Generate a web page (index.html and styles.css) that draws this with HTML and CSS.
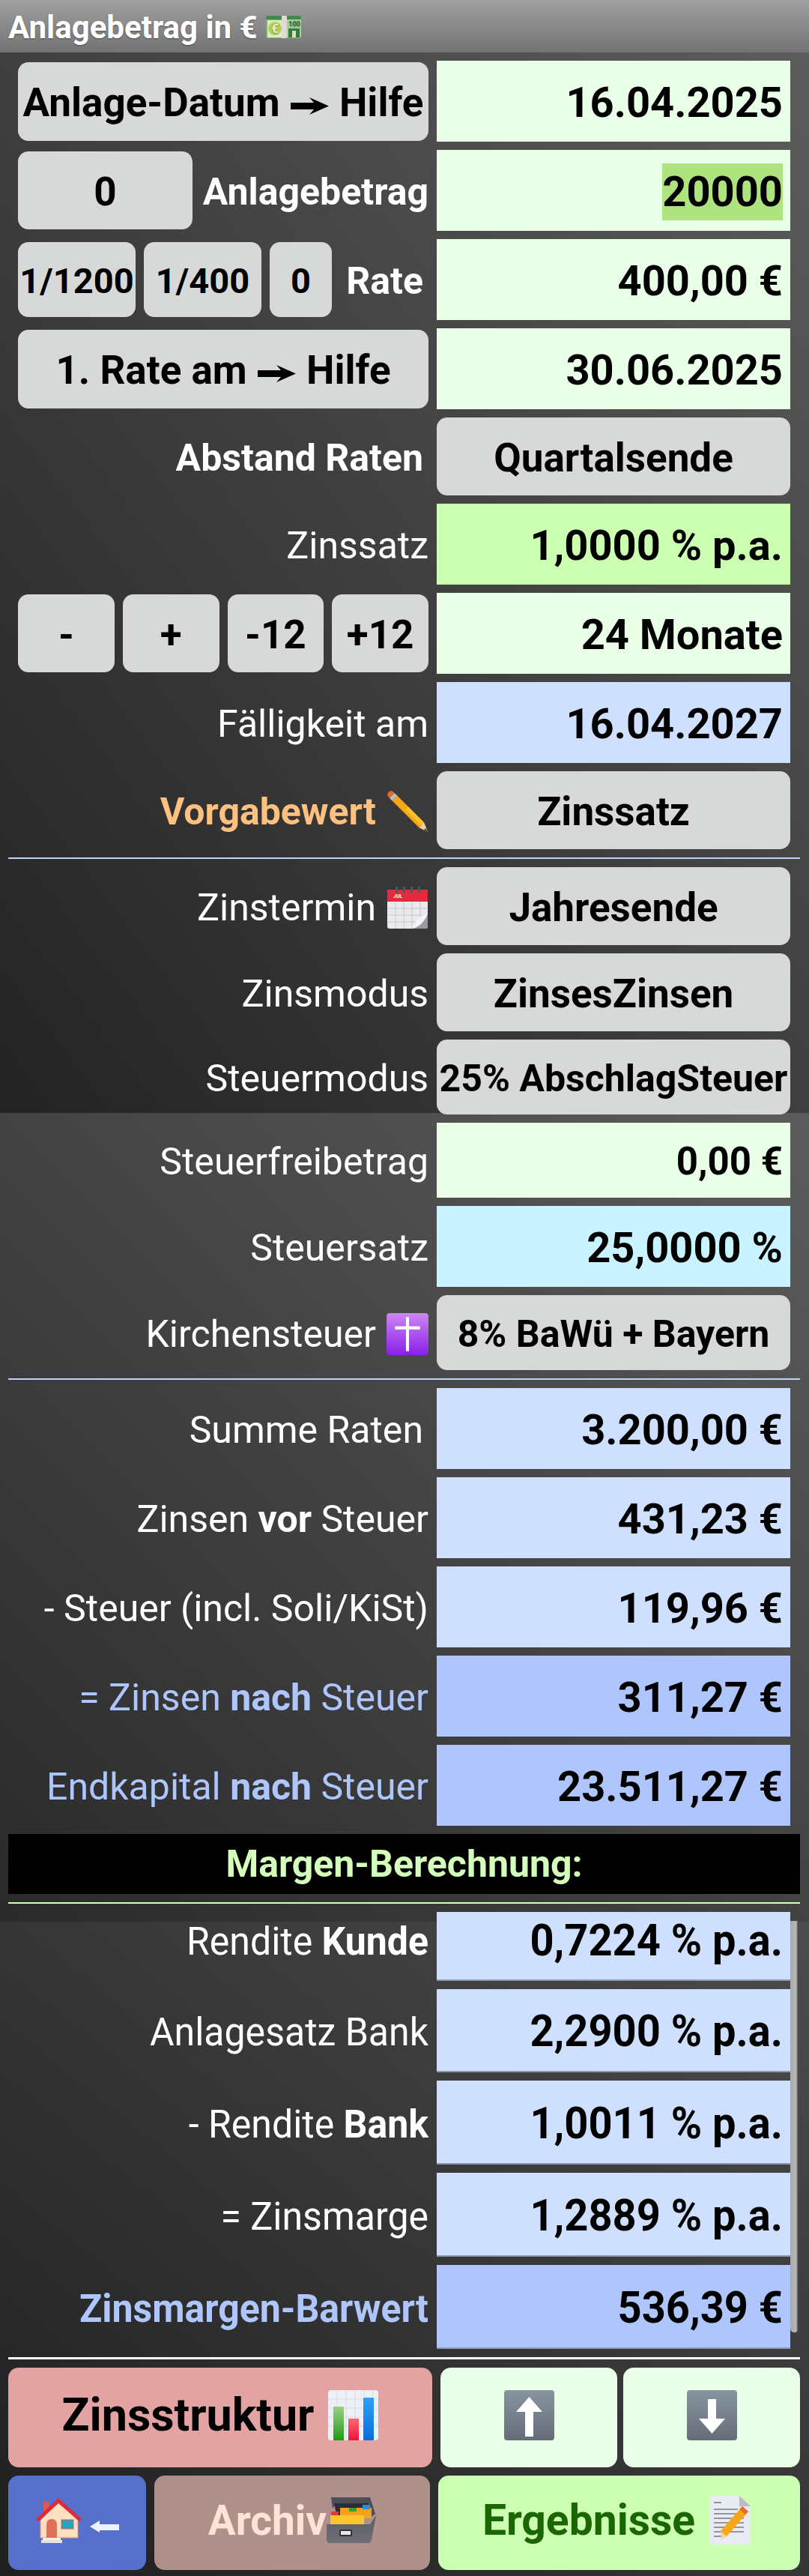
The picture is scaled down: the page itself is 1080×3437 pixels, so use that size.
FILE: index.html
```html
<!DOCTYPE html>
<html lang="de">
<head>
    <meta charset="UTF-8">
    <meta name="viewport" content="width=device-width, initial-scale=1.0">
    <title>Anlagebetrag in €</title>
    <link rel="stylesheet" href="styles.css">
</head>
<body>
    <header class="title-bar">
        <span>Anlagebetrag in €</span>
        <svg class="ico-note" viewBox="0 0 47 30">
            <rect x="0" y="0" width="47" height="30" rx="3" fill="#7fb56f"/>
            <rect x="0" y="0" width="47" height="5" rx="2" fill="#3f8a4a"/>
            <rect x="2" y="6" width="20" height="23" fill="#dbeacb"/>
            <circle cx="12" cy="17" r="9" fill="#b5cf55"/>
            <text x="12" y="23" text-anchor="middle" class="ico-text" font-size="16" fill="#eef5c0">€</text>
            <rect x="21" y="0" width="7" height="30" fill="#dcdcd4"/>
            <rect x="28" y="5" width="19" height="24" fill="#a8cf9a"/>
            <text x="38" y="14" text-anchor="middle" class="ico-text" font-size="9" fill="#2e6b36">100</text>
            <rect x="30" y="17" width="15" height="12" fill="#2f7d3c"/>
            <rect x="35" y="20" width="5" height="9" fill="#cfe4c0"/>
        </svg>
    </header>

    <main class="screen">
        <div class="row">
            <button class="btn btn-wide">Anlage-Datum <svg class="arrow" viewBox="0 0 51 23"><polygon points="0,7 31,7 25,0 51,11.500 25,23 31,16 0,16"/></svg> Hilfe</button>
            <div class="val val-green">16.04.2025</div>
        </div>
        <div class="row">
            <div class="left-split">
                <button class="btn btn-zero">0</button>
                <span class="lab lab-bold">Anlagebetrag</span>
            </div>
            <div class="val val-green"><span class="selected">20000</span></div>
        </div>
        <div class="row">
            <div class="left-split left-split-tight">
                <button class="btn btn-frac btn-small">1/1200</button>
                <button class="btn btn-frac btn-small">1/400</button>
                <button class="btn btn-nil btn-small">0</button>
                <span class="lab lab-bold lab-inset">Rate</span>
            </div>
            <div class="val val-green">400,00 €</div>
        </div>
        <div class="row">
            <button class="btn btn-wide">1. Rate am <svg class="arrow" viewBox="0 0 51 23"><polygon points="0,7 31,7 25,0 51,11.500 25,23 31,16 0,16"/></svg> Hilfe</button>
            <div class="val val-green">30.06.2025</div>
        </div>
        <div class="row row-104">
            <span class="lab lab-bold lab-inset">Abstand Raten</span>
            <button class="btn btn-full">Quartalsende</button>
        </div>
        <div class="row">
            <span class="lab">Zinssatz</span>
            <div class="val val-lime">1,0000 % p.a.</div>
        </div>
        <div class="row">
            <div class="step-grid">
                <button class="btn btn-step">-</button>
                <button class="btn btn-step">+</button>
                <button class="btn btn-step">-12</button>
                <button class="btn btn-step">+12</button>
            </div>
            <div class="val val-green">24 Monate</div>
        </div>
        <div class="row">
            <span class="lab">Fälligkeit am</span>
            <div class="val val-blue">16.04.2027</div>
        </div>
        <div class="row row-104">
            <span class="lab lab-bold lab-orange lab-icon">Vorgabewert
                <svg class="ico-emoji" viewBox="0 0 58 58">
                    <polygon points="52,44 15,7 8,14 45,51" fill="#f7a713"/>
                    <polygon points="52,44 30,22 26,26 48,48" fill="#fbc02d"/>
                    <polygon points="15,7 8,14 4,10 11,3" fill="#bdbdbd"/>
                    <path d="M11 3 L4 10 Q-1 5 3 2 Q7 -2 11 3Z" fill="#ea6a2a"/>
                    <polygon points="52,44 45,51 57,57" fill="#f3cfa2"/>
                    <polygon points="54,52 52,54 57,57" fill="#333"/>
                </svg>
            </span>
            <button class="btn btn-full">Zinssatz</button>
        </div>

        <hr class="rule rule-blue">

        <div class="row row-104">
            <span class="lab lab-icon">Zinstermin
                <svg class="ico-emoji" viewBox="0 0 54 56">
                    <rect x="0" y="4" width="54" height="52" rx="3" fill="#e9e9ee"/>
                    <path d="M3 4 H51 Q54 4 54 7 V20 H0 V7 Q0 4 3 4Z" fill="#e8283c"/>
                    <rect x="11" y="0" width="3" height="8" fill="#555"/>
                    <rect x="21" y="0" width="3" height="8" fill="#555"/>
                    <rect x="31" y="0" width="3" height="8" fill="#555"/>
                    <rect x="41" y="0" width="3" height="8" fill="#555"/>
                    <text x="8" y="15" class="ico-text" font-size="7" fill="#fff">JUL</text>
                    <path d="M1 29 H53 M1 38 H53 M1 47 H53 M11 20 V56 M22 20 V56 M33 20 V56 M44 20 V56" stroke="#c6c6cf" stroke-width="1"/>
                    <path d="M54 36 V53 Q54 56 51 56 H34 Q48 50 54 36Z" fill="#9a9aa4"/>
                    <path d="M54 36 Q40 38 34 56 Q48 52 54 36Z" fill="#f4f4f6"/>
                </svg>
            </span>
            <button class="btn btn-full">Jahresende</button>
        </div>
        <div class="row row-104">
            <span class="lab">Zinsmodus</span>
            <button class="btn btn-full">ZinsesZinsen</button>
        </div>
        <div class="row row-100">
            <span class="lab">Steuermodus</span>
            <button class="btn btn-full btn-tight">25% AbschlagSteuer</button>
        </div>
        <div class="row row-100">
            <span class="lab">Steuerfreibetrag</span>
            <div class="val val-green val-small">0,00 €</div>
        </div>
        <div class="row">
            <span class="lab">Steuersatz</span>
            <div class="val val-cyan">25,0000 %</div>
        </div>
        <div class="row row-100">
            <span class="lab lab-icon">Kirchensteuer
                <svg class="ico-emoji" viewBox="0 0 54 54">
                    <defs>
                        <linearGradient id="crossBg" x1="0" y1="0" x2="0" y2="1">
                            <stop offset="0" stop-color="#cd86f5"/>
                            <stop offset="1" stop-color="#8a1fe8"/>
                        </linearGradient>
                    </defs>
                    <rect width="54" height="54" rx="4" fill="url(#crossBg)"/>
                    <rect x="25" y="5" width="4" height="44" fill="#fff"/>
                    <rect x="11" y="17" width="32" height="4" fill="#fff"/>
                </svg>
            </span>
            <button class="btn btn-full btn-tight">8% BaWü + Bayern</button>
        </div>

        <hr class="rule rule-blue">

        <div class="row">
            <span class="lab lab-inset">Summe Raten</span>
            <div class="val val-blue">3.200,00 €</div>
        </div>
        <div class="row">
            <span class="lab">Zinsen <b>vor</b> Steuer</span>
            <div class="val val-blue">431,23 €</div>
        </div>
        <div class="row">
            <span class="lab">- Steuer (incl. Soli/KiSt)</span>
            <div class="val val-blue">119,96 €</div>
        </div>
        <div class="row">
            <span class="lab lab-sky">= Zinsen <b>nach</b> Steuer</span>
            <div class="val val-strong">311,27 €</div>
        </div>
        <div class="row">
            <span class="lab lab-sky">Endkapital <b>nach</b> Steuer</span>
            <div class="val val-strong">23.511,27 €</div>
        </div>

        <div class="banner">Margen-Berechnung:</div>
        <hr class="rule rule-green">

        <div class="margin-block">
            <div class="row row-92">
                <span class="lab">Rendite <b>Kunde</b></span>
                <div class="val val-blue val-edge"><span>0,7224 % p.a.</span></div>
            </div>
            <div class="row row-111">
                <span class="lab">Anlagesatz Bank</span>
                <div class="val val-blue val-edge"><span>2,2900 % p.a.</span></div>
            </div>
            <div class="row row-112">
                <span class="lab">- Rendite <b>Bank</b></span>
                <div class="val val-blue val-edge"><span>1,0011 % p.a.</span></div>
            </div>
            <div class="row row-112">
                <span class="lab">= Zinsmarge</span>
                <div class="val val-blue val-edge"><span>1,2889 % p.a.</span></div>
            </div>
            <div class="row row-112">
                <span class="lab lab-bold lab-sky">Zinsmargen-Barwert</span>
                <div class="val val-strong val-edge"><span>536,39 €</span></div>
            </div>
            <div class="scrollbar"></div>
        </div>

        <hr class="rule rule-white">

        <div class="action-row">
            <button class="action action-rose">Zinsstruktur
                <svg class="ico-big" viewBox="0 0 67 67">
                    <defs>
                        <linearGradient id="barGreen" x1="0" y1="0" x2="0" y2="1">
                            <stop offset="0" stop-color="#9ed08a"/>
                            <stop offset="1" stop-color="#1f9a10"/>
                        </linearGradient>
                        <linearGradient id="barRed" x1="0" y1="0" x2="0" y2="1">
                            <stop offset="0" stop-color="#ff6a70"/>
                            <stop offset="1" stop-color="#f0103a"/>
                        </linearGradient>
                        <linearGradient id="barBlue" x1="0" y1="0" x2="0" y2="1">
                            <stop offset="0" stop-color="#2ea2f5"/>
                            <stop offset="1" stop-color="#0a6cdc"/>
                        </linearGradient>
                    </defs>
                    <rect width="67" height="67" rx="4" fill="#eef0f6"/>
                    <path d="M0 12 H67 M0 24 H67 M0 36 H67 M0 48 H67 M12 0 V67 M24 0 V67 M36 0 V67 M48 0 V67 M60 0 V67" stroke="#d5dae6" stroke-width="1"/>
                    <rect x="7" y="22" width="14" height="45" fill="url(#barGreen)"/>
                    <rect x="27" y="38" width="14" height="29" fill="url(#barRed)"/>
                    <rect x="47" y="10" width="14" height="57" rx="1" fill="url(#barBlue)"/>
                </svg>
            </button>
            <button class="action action-mint">
                <svg class="ico-big" viewBox="0 0 67 67">
                    <defs>
                        <linearGradient id="keyBg" x1="0" y1="0" x2="0" y2="1">
                            <stop offset="0" stop-color="#8795a0"/>
                            <stop offset="1" stop-color="#666c78"/>
                        </linearGradient>
                    </defs>
                    <rect width="67" height="67" rx="4" fill="url(#keyBg)"/>
                    <polygon points="33.500,9 51,29 39,29 39,62 28,62 28,29 16,29" fill="#fff"/>
                </svg>
            </button>
            <button class="action action-mint">
                <svg class="ico-big" viewBox="0 0 67 67">
                    <rect width="67" height="67" rx="4" fill="url(#keyBg)"/>
                    <polygon points="33.500,58 51,38 39,38 39,12 28,12 28,38 16,38" fill="#fff"/>
                </svg>
            </button>
        </div>

        <div class="action-row action-row-low">
            <button class="action action-home">
                <svg class="ico-house" viewBox="0 0 61 60">
                    <rect x="10" y="5" width="8" height="14" fill="#e0574f"/>
                    <polygon points="30,5 56,30 56,53 6,53 6,30" fill="#fde0c0" stroke="#e88f78" stroke-width="1"/>
                    <polygon points="30,0 61,28 58,31 30,7 3,31 0,28" fill="#e0283a"/>
                    <path d="M14 53 V36 Q14 28 21 28 Q28 28 28 36 V53Z" fill="#e0705a"/>
                    <rect x="34" y="29" width="16" height="12" fill="#2aa3c0" stroke="#c86a50" stroke-width="1"/>
                    <rect x="9" y="53" width="24" height="3" fill="#f3eee6"/>
                    <rect x="7" y="56" width="28" height="4" fill="#e8e4da"/>
                </svg>
                <svg class="ico-back" viewBox="0 0 39 16">
                    <polygon points="0,8 13,0 13,5 39,5 39,13 13,13 13,16" fill="#eef2fa"/>
                </svg>
            </button>
            <button class="action action-archive">Archiv<svg class="ico-box" viewBox="0 0 66 61">
                    <defs>
                        <linearGradient id="boxBody" x1="0" y1="0" x2="0" y2="1">
                            <stop offset="0" stop-color="#5c5c66"/>
                            <stop offset="1" stop-color="#6f6f78"/>
                        </linearGradient>
                    </defs>
                    <polygon points="6,0 58,0 65,22 60,26 56,8 13,8 8,15" fill="#4d4f58"/>
                    <polygon points="10,8 56,8 60,28 14,28" fill="#2c2e34"/>
                    <rect x="18" y="14" width="42" height="14" fill="#f6a11a"/>
                    <rect x="30" y="14" width="10" height="5" fill="#3c9a3c"/>
                    <rect x="48" y="10" width="10" height="6" fill="#2e8ec8"/>
                    <rect x="6" y="19" width="10" height="6" fill="#e2383c"/>
                    <path d="M5 24 H50 V36 H5Z" fill="#fcc52e"/>
                    <polygon points="0,36 58,36 66,24 60,57 58,61 2,61 0,58" fill="url(#boxBody)"/>
                    <rect x="17" y="43" width="17" height="9" rx="1" fill="#33343a"/>
                    <rect x="19" y="45" width="13" height="5" fill="#e8e8e8"/>
                </svg>
            </button>
            <button class="action action-lime">Ergebnisse
                <svg class="ico-memo" viewBox="0 0 55 65">
                    <path d="M3 0 H40 L55 14 V62 Q55 65 52 65 H3 Q0 65 0 62 V3 Q0 0 3 0Z" fill="#e9ebf2"/>
                    <polygon points="40,0 55,14 40,14" fill="#b9bcc6"/>
                    <path d="M6 9 H16 M6 18 H38 M6 24 H46 M6 30 H46 M6 36 H46 M6 42 H46 M6 48 H46 M6 54 H22" stroke="#77797f" stroke-width="1.500" fill="none"/>
                    <polygon points="44,14 52,21 23,54 15,47" fill="#f7a713"/>
                    <polygon points="44,14 52,21 48,25 40,18" fill="#ea6a2a"/>
                    <polygon points="15,47 23,54 16,58" fill="#f3cfa2"/>
                </svg>
            </button>
        </div>
    </main>
</body>
</html>
```

FILE: styles.css
```css
* {
    box-sizing: border-box;
}

body {
    margin: 0;
    width: 1080px;
    font-family: Roboto, sans-serif;
    background-color: #222;
}

button {
    font-family: inherit;
    border: none;
    padding: 0;
    color: #000;
}

/* top bar */
.title-bar {
    height: 70px;
    display: flex;
    align-items: center;
    padding: 2px 0 0 11px;
    gap: 11px;
    color: #fff;
    font-size: 42px;
    font-weight: 700;
    background: linear-gradient(#a0a0a0, #737373);
    text-shadow: 0 1px 2px rgba(0, 0, 0, 0.4);
}

.ico-note {
    width: 47px;
    height: 30px;
}

.ico-text {
    font-family: Roboto, sans-serif;
    font-weight: 700;
}

/* the backdrop restarts twice further down the page */
.screen {
    height: 3367px;
    padding-top: 11px;
    display: flex;
    flex-direction: column;
    gap: 11px;
    background-image:
        linear-gradient(to top right, #232323, #5c5c5c),
        linear-gradient(to top right, #2a2a2a, #5c5c5c),
        linear-gradient(to top right, #1f1f1f, #4c4c4c);
    background-size: 100% 1415px, 100% 1079px, 100% 873px;
    background-position: 0 0, 0 1415px, 0 2494px;
    background-repeat: no-repeat;
}

.row {
    height: 108px;
    display: grid;
    grid-template-columns: 548px 472px;
    column-gap: 11px;
    padding-left: 24px;
    flex: none;
}

.row-92 { height: 92px; }
.row-100 { height: 100px; }
.row-104 { height: 104px; }
.row-111 { height: 111px; }
.row-112 { height: 112px; }

/* value boxes */
.val {
    display: flex;
    align-items: center;
    justify-content: flex-end;
    padding: 3px 10px 0 0;
    font-size: 56px;
    font-weight: 700;
    color: #000;
}

.val-small { font-size: 51px; }
.val-green { background-color: #e9ffe8; }
.val-lime { background-color: #ccffb2; }
.val-blue { background-color: #cfe0ff; }
.val-strong { background-color: #aec6fb; }
.val-cyan { background-color: #c8f3ff; }
.val-edge { border-bottom: 2px solid #8d99b5; }

.selected {
    background-color: #aee37f;
    padding: 5px 0;
}

/* labels */
.lab {
    align-self: center;
    text-align: right;
    color: #fff;
    font-size: 50px;
    white-space: nowrap;
    display: block;
    margin-top: 3px;
}

.lab-bold { font-weight: 700; }
.lab-inset { padding-right: 7px; }
.lab-orange { color: #ffc080; }
.lab-sky { color: #aec6fb; }

.lab b {
    font-weight: 700;
}

.lab-icon {
    display: flex;
    align-items: center;
    justify-content: flex-end;
    gap: 14px;
}

.ico-emoji {
    width: 56px;
    height: 56px;
    flex: none;
}

/* grey buttons */
.btn {
    background-color: #d7d9d8;
    border-radius: 14px;
    padding-top: 3px;
    font-size: 53px;
    font-weight: 700;
    white-space: nowrap;
}

.btn-wide {
    height: 105px;
    align-self: center;
}

.btn-full {
    height: 100%;
}

.btn-tight {
    font-size: 50px;
}

.arrow {
    width: 51px;
    height: 23px;
    margin: 0 1px;
    vertical-align: 2px;
}

.left-split {
    display: flex;
    align-items: center;
    gap: 12px;
}

.left-split .lab {
    margin-left: auto;
}

.btn-zero {
    width: 233px;
    height: 104px;
    flex: none;
}

.btn-small {
    height: 100px;
    font-size: 47px;
    flex: none;
}

.btn-frac {
    width: 157px;
}

.btn-nil {
    width: 83px;
}

.left-split-tight {
    gap: 11px;
}

.step-grid {
    display: grid;
    grid-template-columns: repeat(4, 1fr);
    gap: 11px;
    align-items: center;
}

.btn-step {
    height: 104px;
}

/* dividers */
.rule {
    flex: none;
    height: 2px;
    margin: 0 12px 0 11px;
    border: none;
}

.rule-blue { background-color: #c0d0ff; }
.rule-green { background-color: #d4ffbb; }
.rule-white { background-color: #fff; height: 3px; }

.banner {
    flex: none;
    height: 80px;
    margin: 0 12px 0 11px;
    background-color: #000;
    color: #d4ffbb;
    font-size: 50px;
    font-weight: 700;
    display: flex;
    align-items: center;
    justify-content: center;
}

/* margin part with its scroll thumb, text is drawn a bit taller here */
.margin-block {
    position: relative;
    flex: none;
    display: flex;
    flex-direction: column;
    gap: 11px;
}

.margin-block .lab,
.margin-block .val span {
    display: inline-block;
    transform: scaleY(1.05);
}

.row-92 .lab {
    margin-bottom: 18px;
}

.row-92 .val {
    padding-bottom: 18px;
}

.scrollbar {
    position: absolute;
    top: 12px;
    left: 1055px;
    width: 11px;
    height: 549px;
    border-radius: 0 0 6px 6px;
    background: linear-gradient(to right, #a8a8a8, #b8b8b8 70%, #333);
}

/* bottom buttons */
.action-row {
    flex: none;
    height: 133px;
    display: grid;
    grid-template-columns: 569px 236px 236px;
    column-gap: 8px;
    padding: 0 12px 0 11px;
}

.action-row-low {
    height: 126px;
    grid-template-columns: 184px 368px 483px;
    column-gap: 11px;
}

.action {
    border-radius: 14px;
    padding-bottom: 7px;
    display: flex;
    align-items: center;
    justify-content: center;
    gap: 19px;
    font-size: 61px;
    font-weight: 700;
    white-space: nowrap;
}

.action-rose { background-color: #e3a3a3; margin-right: 3px; }
.action-mint { background-color: #e9ffe7; }
.action-home { background-color: #5670cb; gap: 11px; }
.action-archive { background-color: #b0908a; color: #ffe3d6; gap: 0; font-size: 55px; }
.action-lime { background-color: #ccffb2; color: #1a6600; font-size: 57px; padding-right: 7px; }

.ico-big {
    width: 67px;
    height: 67px;
}

.ico-house {
    width: 61px;
    height: 60px;
}

.ico-back {
    width: 39px;
    height: 16px;
    margin-top: 16px;
}

.ico-box {
    width: 66px;
    height: 61px;
}

.ico-memo {
    width: 55px;
    height: 65px;
}
```
